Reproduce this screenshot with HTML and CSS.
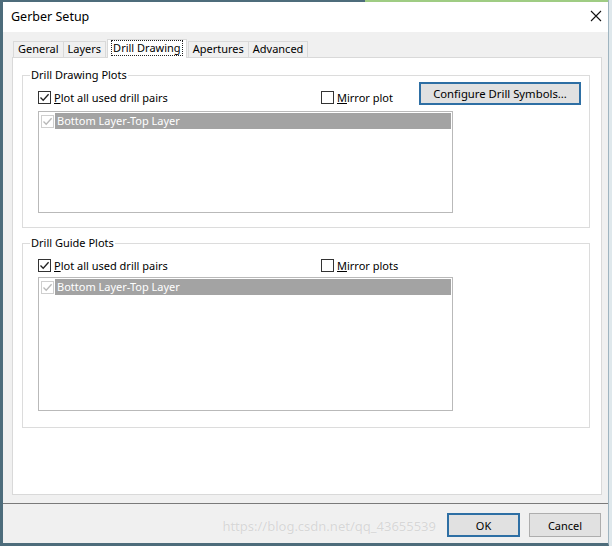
FILE: index.html
```html
<!DOCTYPE html>
<html lang="en">
<head>
    <meta charset="UTF-8">
    <title>Gerber Setup</title>
    <link rel="stylesheet" href="styles.css">
</head>
<body>
    <div class="screen">
        <div class="window">
            <div class="topstrip"><span class="dark"></span><span class="lite"></span></div>
            <div class="titlebar">
                <span class="title">Gerber Setup</span>
                <svg class="close" width="12" height="12" viewBox="0 0 12 12">
                    <path d="M1 1 L11 11 M11 1 L1 11" stroke="#111" stroke-width="1.1" fill="none"/>
                </svg>
            </div>
            <div class="body">
                <div class="tabs">
                    <div class="tab">General</div>
                    <div class="tab">Layers</div>
                    <div class="tab active"><span class="focus">Drill Drawing</span></div>
                    <div class="tab">Apertures</div>
                    <div class="tab">Advanced</div>
                </div>
                <div class="page">
                    <fieldset class="group group-drawing">
                        <legend>Drill Drawing Plots</legend>
                        <div class="row">
                            <label class="check first">
                                <span class="box"><svg width="11" height="11" viewBox="0 0 11 11"><path d="M1.5 5.5 L4.2 8.3 L9.6 2.2" stroke="#222" stroke-width="1.3" fill="none"/></svg></span>
                                <span><u>P</u>lot all used drill pairs</span>
                            </label>
                            <label class="check">
                                <span class="box"></span>
                                <span><u>M</u>irror plot</span>
                            </label>
                            <button class="btn btn-default btn-config">Configure Drill Symbols...</button>
                        </div>
                        <div class="listbox">
                            <div class="item">
                                <span class="box disabled"><svg width="11" height="11" viewBox="0 0 11 11"><path d="M1.5 5.5 L4.2 8.3 L9.6 2.2" stroke="#b8b8b8" stroke-width="1.3" fill="none"/></svg></span>
                                <span class="item-text">Bottom Layer-Top Layer</span>
                            </div>
                        </div>
                    </fieldset>
                    <fieldset class="group group-guide">
                        <legend>Drill Guide Plots</legend>
                        <div class="row">
                            <label class="check first">
                                <span class="box"><svg width="11" height="11" viewBox="0 0 11 11"><path d="M1.5 5.5 L4.2 8.3 L9.6 2.2" stroke="#222" stroke-width="1.3" fill="none"/></svg></span>
                                <span><u>P</u>lot all used drill pairs</span>
                            </label>
                            <label class="check">
                                <span class="box"></span>
                                <span><u>M</u>irror plots</span>
                            </label>
                        </div>
                        <div class="listbox">
                            <div class="item">
                                <span class="box disabled"><svg width="11" height="11" viewBox="0 0 11 11"><path d="M1.5 5.5 L4.2 8.3 L9.6 2.2" stroke="#b8b8b8" stroke-width="1.3" fill="none"/></svg></span>
                                <span class="item-text">Bottom Layer-Top Layer</span>
                            </div>
                        </div>
                    </fieldset>
                </div>
            </div>
            <div class="footer">
                <span class="watermark">https://blog.csdn.net/qq_43655539</span>
                <button class="btn btn-default btn-ok">OK</button>
                <button class="btn btn-cancel">Cancel</button>
            </div>
        </div>
    </div>
</body>
</html>
```

FILE: styles.css
```css
* {
    box-sizing: border-box;
}
body {
    margin: 0;
    font-family: "Noto Sans", "Open Sans", sans-serif;
    font-size: 11px;
    color: #000;
}
.screen {
    width: 612px;
    height: 546px;
    background: #dfe8ec;
    overflow: hidden;
}
.window {
    width: 609px;
    height: 546px;
    display: flex;
    flex-direction: column;
    background: #f0f0f0;
    border-left: 3px solid #4d6c7b;
    border-right: 1px solid #9fb4c0;
    border-bottom: 3px solid #4d6c7b;
}
.topstrip {
    height: 2px;
    display: flex;
}
.topstrip .dark {
    width: 362px;
    background: #4d6c7b;
}
.topstrip .lite {
    flex: 1;
    background: #9fcc83;
}
.titlebar {
    height: 30px;
    background: #fff;
    display: flex;
    align-items: center;
    justify-content: space-between;
    padding: 0 6px 2px 8px;
}
.title {
    font-size: 12.5px;
}
.body {
    flex: 1;
    display: flex;
    flex-direction: column;
    padding: 7px 6px 8px 9px;
}
.tabs {
    display: flex;
    align-items: flex-end;
    height: 18px;
    margin-left: 1px;
    position: relative;
    z-index: 1;
}
.tab {
    height: 16px;
    line-height: 14px;
    padding: 0 4px;
    border: 1px solid #d9d9d9;
    border-bottom: none;
    background: #f0f0f0;
    margin-right: -1px;
}
.tab.active {
    height: 19px;
    margin: 0 1px -1px 2px;
    padding: 1px 4px 0;
    background: #fff;
}
.focus {
    display: inline-block;
    line-height: 14px;
    padding: 0 1px;
    outline: 1px dotted #222;
}
.page {
    flex: 1;
    background: #fff;
    border: 1px solid #d9d9d9;
}
.group {
    width: 568px;
    margin: 10px 11px 0 9px;
    padding: 0 8px 14px 15px;
    border: 1px solid #dcdcdc;
    min-width: 0;
}
.group legend {
    margin-left: -8px;
    padding: 0 1px;
    line-height: 14px;
}
.row {
    display: flex;
    align-items: flex-end;
    min-height: 23px;
}
.check {
    display: flex;
    align-items: center;
    gap: 3px;
    height: 16px;
}
.check.first {
    width: 283px;
}
.box {
    width: 13px;
    height: 13px;
    border: 1px solid #333;
    background: #fff;
    display: flex;
    align-items: center;
    justify-content: center;
}
.box.disabled {
    border-color: #cfcfcf;
    margin: 0 1px;
}
.btn {
    font: inherit;
    color: #000;
    background: #e1e1e1;
    border: 1px solid #adadad;
    padding: 0;
}
.btn-default {
    border: 2px solid #2e6fa4;
}
.btn-config {
    margin-left: auto;
    width: 162px;
    height: 23px;
    font-size: 11.3px;
}
.listbox {
    width: 415px;
    height: 102px;
    margin-top: 6px;
    padding: 1px;
    border: 1px solid #b9b9b9;
    background: #fff;
}
.group-guide {
    margin-top: 8px;
    padding-bottom: 16px;
}
.group-guide .listbox {
    height: 134px;
    margin-top: 4px;
}
.item {
    display: flex;
    align-items: center;
    height: 16px;
}
.item-text {
    flex: 1;
    height: 16px;
    line-height: 16px;
    padding-left: 2px;
    background: #a3a3a3;
    color: #fff;
}
.footer {
    height: 40px;
    display: flex;
    justify-content: flex-end;
    align-items: flex-start;
    gap: 9px;
    padding: 9px 7px 0 0;
    border-top: 1px solid #7a7a7a;
}
.watermark {
    margin-top: 4px;
    margin-right: 2px;
    font-size: 13px;
    color: rgba(205, 205, 205, 0.8);
    text-shadow: 0 0 1px rgba(255, 255, 255, 0.9);
}
.btn-ok {
    width: 73px;
    height: 24px;
}
.btn-cancel {
    width: 72px;
    height: 24px;
}
```
